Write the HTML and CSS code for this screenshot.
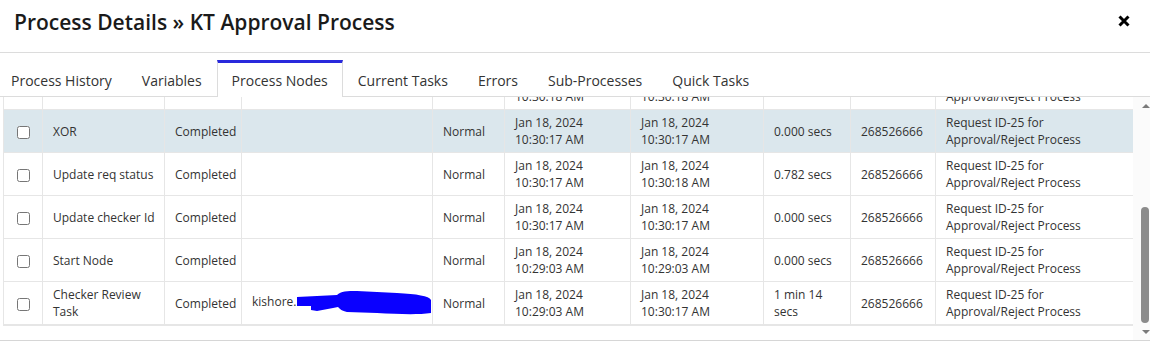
FILE: index.html
```html
<!DOCTYPE html>
<html lang="en">
<head>
    <meta charset="UTF-8">
    <meta name="viewport" content="width=device-width, initial-scale=1.0">
    <title>Process Details</title>
    <link rel="stylesheet" href="styles.css">
</head>
<body>
    <div class="modal-header">
        <h1>Process Details &raquo; KT Approval Process</h1>
        <button class="close" aria-label="Close">
            <svg width="12" height="12" viewBox="0 0 12 12"><path d="M1.5 1.5 L10.5 10.5 M10.5 1.5 L1.5 10.5" stroke="#000" stroke-width="3"/></svg>
        </button>
    </div>
    <ul class="tabs">
        <li>Process History</li>
        <li>Variables</li>
        <li class="active">Process Nodes</li>
        <li>Current Tasks</li>
        <li>Errors</li>
        <li>Sub-Processes</li>
        <li>Quick Tasks</li>
    </ul>
    <div class="list-wrap">
        <div class="node-list">
            <table>
                <colgroup>
                    <col style="width:39px"><col style="width:122px"><col style="width:77px"><col style="width:191px"><col style="width:72px">
                    <col style="width:126px"><col style="width:133px"><col style="width:87px"><col style="width:85px"><col style="width:198px">
                </colgroup>
                <thead>
                    <tr>
                        <th><input type="checkbox"></th>
                        <th>Node Name</th>
                        <th>Status</th>
                        <th>Assigned To</th>
                        <th>Priority</th>
                        <th>Start Time</th>
                        <th>End Time</th>
                        <th>Duration</th>
                        <th>Instance Id</th>
                        <th>Description</th>
                    </tr>
                </thead>
                <tbody>
                    <tr>
                        <td><input type="checkbox"></td>
                        <td>End Node</td>
                        <td>Completed</td>
                        <td></td>
                        <td>Normal</td>
                        <td>Jan 18, 2024<br>10:30:18 AM</td>
                        <td>Jan 18, 2024<br>10:30:18 AM</td>
                        <td>0.000 secs</td>
                        <td>268526666</td>
                        <td>Request ID-25 for Approval/Reject Process</td>
                    </tr>
                    <tr>
                        <td><input type="checkbox"></td>
                        <td>Approved</td>
                        <td>Completed</td>
                        <td></td>
                        <td>Normal</td>
                        <td>Jan 18, 2024<br>10:30:18 AM</td>
                        <td>Jan 18, 2024<br>10:30:18 AM</td>
                        <td>0.000 secs</td>
                        <td>268526666</td>
                        <td>Request ID-25 for Approval/Reject Process</td>
                    </tr>
                    <tr>
                        <td><input type="checkbox"></td>
                        <td>Send mail</td>
                        <td>Completed</td>
                        <td></td>
                        <td>Normal</td>
                        <td>Jan 18, 2024<br>10:30:18 AM</td>
                        <td>Jan 18, 2024<br>10:30:18 AM</td>
                        <td>0.000 secs</td>
                        <td>268526666</td>
                        <td>Request ID-25 for Approval/Reject Process</td>
                    </tr>
                    <tr>
                        <td><input type="checkbox"></td>
                        <td>Gateway</td>
                        <td>Completed</td>
                        <td></td>
                        <td>Normal</td>
                        <td>Jan 18, 2024<br>10:30:18 AM</td>
                        <td>Jan 18, 2024<br>10:30:18 AM</td>
                        <td>0.000 secs</td>
                        <td>268526666</td>
                        <td>Request ID-25 for Approval/Reject Process</td>
                    </tr>
                    <tr class="selected">
                        <td><input type="checkbox"></td>
                        <td>XOR</td>
                        <td>Completed</td>
                        <td></td>
                        <td>Normal</td>
                        <td>Jan 18, 2024<br>10:30:17 AM</td>
                        <td>Jan 18, 2024<br>10:30:17 AM</td>
                        <td>0.000 secs</td>
                        <td>268526666</td>
                        <td>Request ID-25 for Approval/Reject Process</td>
                    </tr>
                    <tr>
                        <td><input type="checkbox"></td>
                        <td>Update req status</td>
                        <td>Completed</td>
                        <td></td>
                        <td>Normal</td>
                        <td>Jan 18, 2024<br>10:30:17 AM</td>
                        <td>Jan 18, 2024<br>10:30:18 AM</td>
                        <td>0.782 secs</td>
                        <td>268526666</td>
                        <td>Request ID-25 for Approval/Reject Process</td>
                    </tr>
                    <tr>
                        <td><input type="checkbox"></td>
                        <td>Update checker Id</td>
                        <td>Completed</td>
                        <td></td>
                        <td>Normal</td>
                        <td>Jan 18, 2024<br>10:30:17 AM</td>
                        <td>Jan 18, 2024<br>10:30:17 AM</td>
                        <td>0.000 secs</td>
                        <td>268526666</td>
                        <td>Request ID-25 for Approval/Reject Process</td>
                    </tr>
                    <tr>
                        <td><input type="checkbox"></td>
                        <td>Start Node</td>
                        <td>Completed</td>
                        <td></td>
                        <td>Normal</td>
                        <td>Jan 18, 2024<br>10:29:03 AM</td>
                        <td>Jan 18, 2024<br>10:29:03 AM</td>
                        <td>0.000 secs</td>
                        <td>268526666</td>
                        <td>Request ID-25 for Approval/Reject Process</td>
                    </tr>
                    <tr>
                        <td><input type="checkbox"></td>
                        <td>Checker Review Task</td>
                        <td>Completed</td>
                        <td class="assignee">kishore.<svg class="redact" width="134" height="24" viewBox="0 0 134 24"><path d="M0 6 L40 4 C44 0 50 0 60 0 L100 2 C120 3 132 5 134 9 L134 22 C120 24 100 23 80 22 L50 21 C45 20 43 18 41 16 L36 17 L20 20 L14 19 L14 15 L0 15 Z" fill="#0a00ff"/></svg></td>
                        <td>Normal</td>
                        <td>Jan 18, 2024<br>10:29:03 AM</td>
                        <td>Jan 18, 2024<br>10:30:17 AM</td>
                        <td>1 min 14 secs</td>
                        <td>268526666</td>
                        <td>Request ID-25 for Approval/Reject Process</td>
                    </tr>
                </tbody>
            </table>
        </div>
        <div class="scrollbar">
            <span class="arrow up"></span>
            <div class="track"><div class="thumb"></div></div>
            <span class="arrow down"></span>
        </div>
    </div>
    <script>
        const list = document.querySelector('.node-list');
        list.scrollTop = list.scrollHeight;
    </script>
</body>
</html>
```

FILE: styles.css
```css
body, html {
    margin: 0;
    padding: 0;
    background: #fff;
    font-family: 'Open Sans', 'Liberation Sans', sans-serif;
    color: #333;
    overflow: hidden;
}

.modal-header {
    display: flex;
    justify-content: space-between;
    align-items: flex-start;
    height: 53px;
    box-sizing: border-box;
    padding: 8px 20px 0 14px;
    border-bottom: 1px solid #dcdcdc;
}

.modal-header h1 {
    margin: 0;
    font-size: 21px;
    font-weight: 600;
    line-height: 28px;
    color: #1a1a1a;
}

.close {
    border: none;
    background: none;
    padding: 0;
    margin-top: 7px;
    cursor: pointer;
    line-height: 0;
}

.tabs {
    display: flex;
    list-style: none;
    margin: 0;
    padding: 7px 0 0 0;
    border-bottom: 1px solid #dcdcdc;
}

.tabs li {
    padding: 0 15px;
    height: 33px;
    line-height: 36px;
    font-size: 14px;
    color: #333;
    border-top: 3px solid transparent;
    cursor: pointer;
}

.tabs li:first-child {
    padding-left: 11px;
}

.tabs li.active {
    padding: 0 14px;
    border: 1px solid #dcdcdc;
    border-top: 3px solid #2929dc;
    border-bottom: none;
    background: #fff;
    margin-bottom: -1px;
    height: 34px;
}

.list-wrap {
    display: flex;
    height: 243px;
    border-bottom: 1px solid #d6d6d6;
}

.node-list {
    flex: 1;
    overflow: hidden;
    padding-left: 3px;
}

.scrollbar {
    width: 17px;
    display: flex;
    flex-direction: column;
    background: #fbfbfb;
}

.arrow {
    height: 17px;
    display: flex;
    justify-content: center;
    align-items: center;
    padding-left: 9px;
    box-sizing: border-box;
}

.arrow::before {
    content: "";
    border-left: 4px solid transparent;
    border-right: 4px solid transparent;
}

.arrow.up::before {
    border-bottom: 4px solid #7a7a7a;
}

.arrow.down::before {
    border-top: 4px solid #7a7a7a;
}

.track {
    flex: 1;
    display: flex;
    flex-direction: column;
    justify-content: flex-end;
    align-items: flex-end;
    padding: 0 1px 0 0;
}

.thumb {
    width: 8px;
    height: 116px;
    background: #8b8b8b;
    border-radius: 4px;
}

table {
    width: 1130px;
    table-layout: fixed;
    border-collapse: collapse;
    margin-bottom: 14px;
    border-bottom: 2px solid #e6e6e6;
}

th, td {
    border: 1px solid #e6e6e6;
    padding: 4px 5px 4px 10px;
    font-size: 12px;
    line-height: 17px;
    text-align: left;
    vertical-align: middle;
    color: #333;
}

th {
    height: 29px;
    font-weight: 600;
}

th:first-child, td:first-child {
    text-align: center;
    padding: 0;
}

input[type="checkbox"] {
    margin: 0;
    width: 13px;
    height: 13px;
    vertical-align: middle;
}

tr.selected td {
    background: #dbe7ed;
}

.assignee {
    white-space: nowrap;
}

.redact {
    vertical-align: middle;
    margin-left: 1px;
}
```
